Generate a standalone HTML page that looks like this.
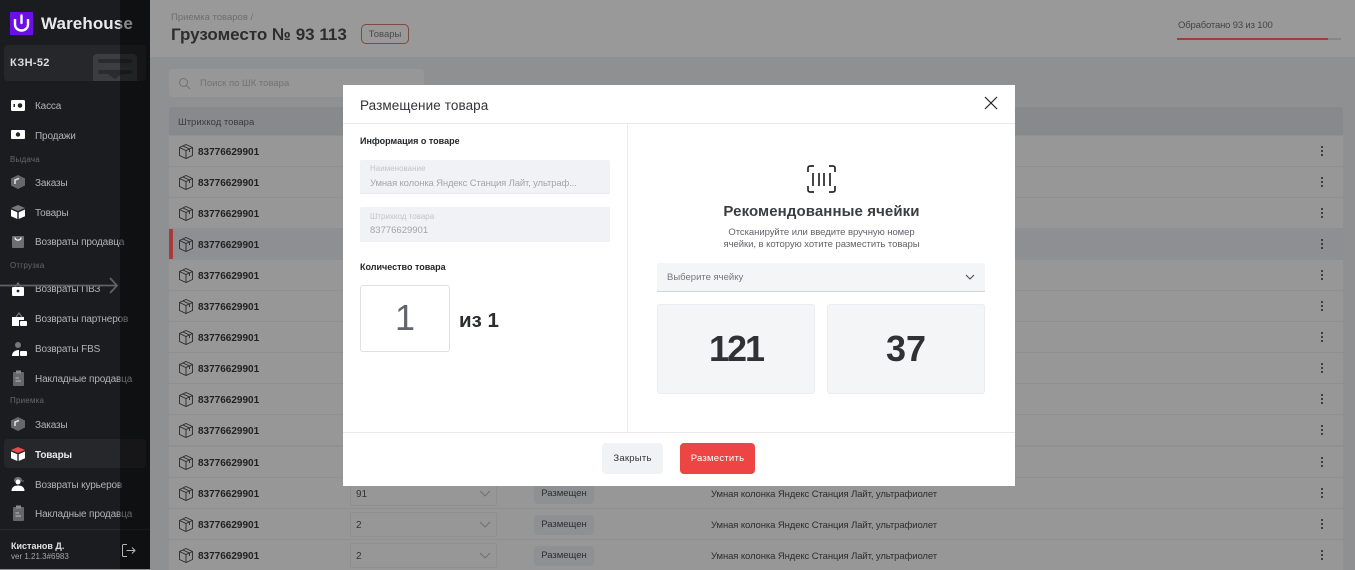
<!DOCTYPE html>
<html lang="ru"><head><meta charset="utf-8"><title>Warehouse</title>
<style>
*{box-sizing:border-box}
html,body{margin:0;padding:0}
body{width:1355px;height:569px;overflow:hidden;position:relative;background:#8f9092;font-family:"Liberation Sans",sans-serif}
.a{position:absolute;white-space:nowrap}
.side{position:absolute;left:0;top:0;width:150px;height:569px;background:#1b1c20;overflow:hidden}
.strip{position:absolute;left:120px;top:0;width:30px;height:569px;background:rgba(0,0,0,.42)}
.m{position:absolute;left:35px;font-size:10px;letter-spacing:-.15px;color:#b3b3b5;line-height:14px;white-space:nowrap;margin-top:1px}
.s{position:absolute;left:10px;font-size:8px;letter-spacing:.2px;color:#66676b;line-height:12px;margin-top:1px}
.ic{position:absolute;left:10px;width:16px;height:16px}
.row{position:absolute;left:169px;width:1174px;height:30px;background:#979797}
.row .id{position:absolute;left:29px;top:10px;font-size:10px;font-weight:bold;color:#222;line-height:14px}
.row svg.box{position:absolute;left:9px;top:7px;width:16px;height:17px}
.row svg.dots{position:absolute;left:1151px;top:8px;width:4px;height:14px}
.sel{position:absolute;left:181px;top:3px;width:147px;height:25px;border:1px solid #8f8f8f;border-radius:2px;font-size:10px;color:#333;padding:7px 5px;line-height:12px}
.st{position:absolute;left:365px;top:6px;width:60px;height:20px;background:#8f9094;border-radius:4px;font-size:9.5px;color:#2e2e2e;text-align:center;line-height:20px}
.nm{position:absolute;left:542px;top:10px;font-size:9.5px;letter-spacing:-.1px;color:#2e2e2e;line-height:13px;white-space:nowrap}
.modal{position:absolute;left:343px;top:85px;width:672px;height:401px;background:#fff}
.fld{position:absolute;left:17px;width:250px;background:#f1f2f5;border-bottom:1px solid #e9eaed;border-radius:2px 2px 0 0}
.fld b{position:absolute;left:10px;font-weight:normal;font-size:8px;color:#c3c4c9;line-height:11px;white-space:nowrap}
.fld i{position:absolute;left:10px;font-style:normal;font-size:9.5px;color:#a4a5ab;line-height:13px;white-space:nowrap}
.cell{position:absolute;top:219px;width:158px;height:90px;background:#f4f5f7;border:1px solid #ecedf0;border-radius:3px;font-weight:bold;font-size:36px;color:#303135;text-align:center;line-height:87px}
</style></head><body>
<svg width="0" height="0" style="position:absolute">
<symbol id="bx" viewBox="0 0 16 17"><path fill="none" stroke="#2a2a2a" stroke-width=".9" d="M8 1.5 14.5 4.5V12.5L8 15.5 1.5 12.5V4.5ZM1.5 4.5 8 7.5 14.5 4.5M8 7.5V15.5M5 3 11.5 6V9"/></symbol>
<symbol id="dt" viewBox="0 0 4 14"><g fill="#222"><circle cx="2" cy="3" r="1"/><circle cx="2" cy="7" r="1"/><circle cx="2" cy="11" r="1"/></g></symbol>
<symbol id="cv" viewBox="0 0 12 7"><path fill="none" stroke="#6f6f6f" stroke-width=".9" d="M1 1 6 6 11 1"/></symbol>
</svg>

<!-- header -->
<div class="a" style="left:150px;top:0;width:1205px;height:57px;background:#999"></div>
<div class="a" style="left:171px;top:11px;font-size:9.5px;color:#6e6e6e;line-height:14px">Приемка товаров /</div>
<div class="a" style="left:171px;top:23px;font-size:17px;font-weight:bold;color:#2d2d2d;line-height:24px">Грузоместо № 93 113</div>
<div class="a" style="left:361px;top:24px;width:48px;height:20px;border:1px solid #7f4a3e;border-radius:5px;font-size:9.5px;color:#4a4a4a;text-align:center;line-height:20px">Товары</div>
<div class="a" style="left:1178px;top:19px;font-size:9.5px;letter-spacing:-.17px;color:#454545;line-height:13px">Обработано 93 из 100</div>
<div class="a" style="left:1177px;top:38px;width:164px;height:2px;background:#86878c"></div>
<div class="a" style="left:1177px;top:38px;width:151px;height:2px;background:#a63a3c"></div>

<!-- search -->
<div class="a" style="left:169px;top:69px;width:255px;height:28px;background:#979797;border-radius:3px"></div>
<svg class="a" style="left:178px;top:77px" width="13" height="13" viewBox="0 0 13 13" fill="none" stroke="#727272" stroke-width="1"><circle cx="5.5" cy="5.5" r="4"/><path d="M8.5 8.5 12 12"/></svg>
<div class="a" style="left:200px;top:77px;font-size:9.5px;color:#737373;line-height:13px">Поиск по ШК товара</div>

<!-- table head -->
<div class="a" style="left:169px;top:107px;width:1174px;height:28px;background:#88898c;border-radius:2px 2px 0 0"></div>
<div class="a" style="left:178px;top:116px;font-size:9.5px;color:#3c3c3c;line-height:14px">Штрихкод товара</div>

<div class="row" style="top:136px"><svg class="box"><use href="#bx"/></svg><div class="id">83776629901</div><svg class="dots"><use href="#dt"/></svg></div>
<div class="row" style="top:167px"><svg class="box"><use href="#bx"/></svg><div class="id">83776629901</div><svg class="dots"><use href="#dt"/></svg></div>
<div class="row" style="top:198px"><svg class="box"><use href="#bx"/></svg><div class="id">83776629901</div><svg class="dots"><use href="#dt"/></svg></div>
<div class="row" style="top:229px;background:#8e8f92"><div class="a" style="left:0;top:0;width:4px;height:30px;background:#a63a3c"></div><svg class="box"><use href="#bx"/></svg><div class="id">83776629901</div><svg class="dots"><use href="#dt"/></svg></div>
<div class="row" style="top:260px"><svg class="box"><use href="#bx"/></svg><div class="id">83776629901</div><svg class="dots"><use href="#dt"/></svg></div>
<div class="row" style="top:291px"><svg class="box"><use href="#bx"/></svg><div class="id">83776629901</div><svg class="dots"><use href="#dt"/></svg></div>
<div class="row" style="top:322px"><svg class="box"><use href="#bx"/></svg><div class="id">83776629901</div><svg class="dots"><use href="#dt"/></svg></div>
<div class="row" style="top:353px"><svg class="box"><use href="#bx"/></svg><div class="id">83776629901</div><svg class="dots"><use href="#dt"/></svg></div>
<div class="row" style="top:384px"><svg class="box"><use href="#bx"/></svg><div class="id">83776629901</div><svg class="dots"><use href="#dt"/></svg></div>
<div class="row" style="top:415px"><svg class="box"><use href="#bx"/></svg><div class="id">83776629901</div><svg class="dots"><use href="#dt"/></svg></div>
<div class="row" style="top:447px"><svg class="box"><use href="#bx"/></svg><div class="id">83776629901</div><svg class="dots"><use href="#dt"/></svg></div>
<div class="row" style="top:478px"><svg class="box"><use href="#bx"/></svg><div class="id">83776629901</div><div class="sel">91<svg class="a" style="left:128px;top:8px" width="12" height="7"><use href="#cv"/></svg></div><div class="st">Размещен</div><div class="nm">Умная колонка Яндекс Станция Лайт, ультрафиолет</div><svg class="dots"><use href="#dt"/></svg></div>
<div class="row" style="top:509px"><svg class="box"><use href="#bx"/></svg><div class="id">83776629901</div><div class="sel">2<svg class="a" style="left:128px;top:8px" width="12" height="7"><use href="#cv"/></svg></div><div class="st">Размещен</div><div class="nm">Умная колонка Яндекс Станция Лайт, ультрафиолет</div><svg class="dots"><use href="#dt"/></svg></div>
<div class="row" style="top:540px"><svg class="box"><use href="#bx"/></svg><div class="id">83776629901</div><div class="sel">2<svg class="a" style="left:128px;top:8px" width="12" height="7"><use href="#cv"/></svg></div><div class="st">Размещен</div><div class="nm">Умная колонка Яндекс Станция Лайт, ультрафиолет</div><svg class="dots"><use href="#dt"/></svg></div>

<!-- sidebar -->
<div class="side">
  <div class="a" style="left:10px;top:12px;width:23px;height:23px;background:#6a0fe8"></div>
  <svg class="a" style="left:10px;top:12px" width="23" height="23" viewBox="0 0 23 23" fill="none" stroke="#fff" stroke-width="2.4"><path d="M11.5 3.5V11" stroke-linecap="round"/><path d="M5 7V12.5C5 16 8 18.5 11.5 18.5S18 16 18 12.5V7"/></svg>
  <div class="a" style="left:41px;top:13px;font-size:17px;font-weight:bold;letter-spacing:.1px;color:#e9e9ea;line-height:22px">Warehouse</div>

  <div class="a" style="left:4px;top:45px;width:142px;height:36px;background:#26272b;border-radius:4px"></div>
  <div class="a" style="left:10px;top:56px;font-size:11px;font-weight:bold;letter-spacing:.3px;color:#dcdcdd;line-height:15px">КЗН-52</div>
  <div class="a" style="left:93px;top:54px;width:44px;height:27px;background:#3c3d41;border-radius:4px 4px 0 0"></div>
  <div class="a" style="left:98px;top:59px;width:34px;height:4px;background:#2a2b2f;border-radius:2px"></div>
  <div class="a" style="left:98px;top:70px;width:34px;height:4px;background:#2a2b2f;border-radius:2px"></div>
  <svg class="a" style="left:108px;top:74px" width="14" height="6" viewBox="0 0 14 6"><path d="M0 0H14L7 5Z" fill="#2a2b2f"/></svg>

  <svg class="ic" style="top:98px" viewBox="0 0 16 16"><rect x="1" y="2" width="14" height="11" rx="1.5" fill="#fff"/><circle cx="10" cy="7.5" r="2.3" fill="#222"/><rect x="3.5" y="6" width="1.5" height="3" fill="#222"/></svg>
  <div class="m" style="top:99px">Касса</div>
  <svg class="ic" style="top:127px" viewBox="0 0 16 16"><rect x="1" y="3" width="14" height="9" rx="1" fill="#fff"/><circle cx="8" cy="7.5" r="2.2" fill="#222"/></svg>
  <div class="m" style="top:129px">Продажи</div>
  <div class="s" style="top:153px">Выдача</div>
  <svg class="ic" style="top:174px" viewBox="0 0 16 16"><path d="M8 1 15 4.5V11.5L8 15 1 11.5V4.5Z" fill="#66676b"/><path d="M5 10V6L9 4.5" stroke="#ddd" stroke-width="1.6" fill="none"/></svg>
  <div class="m" style="top:176px">Заказы</div>
  <svg class="ic" style="top:204px" viewBox="0 0 16 16"><path d="M8 1 15 4 8 7 1 4Z" fill="#77787c"/><path d="M1 5.5 7.3 8.3V15L1 12.2ZM15 5.5 8.7 8.3V15L15 12.2Z" fill="#fff"/></svg>
  <div class="m" style="top:206px">Товары</div>
  <svg class="ic" style="top:234px" viewBox="0 0 16 16"><rect x="2" y="2" width="12" height="12" rx="1" fill="#6d6e72"/><path d="M5 3.5C5 7 11 7 11 3.5" stroke="#fff" stroke-width="1.3" fill="none"/></svg>
  <div class="m" style="top:235px">Возвраты продавца</div>
  <div class="s" style="top:259px">Отгрузка</div>
  <svg class="ic" style="top:281px" viewBox="0 0 16 16"><path d="M5 6 8 2 11 6" stroke="#77787c" stroke-width="1.2" fill="none"/><rect x="2" y="6" width="12" height="9" rx="1" fill="#fff"/><circle cx="8" cy="10" r="1.4" fill="#222"/></svg>
  <div class="m" style="top:282px">Возвраты ПВЗ</div>
  <svg class="ic" style="top:311px;width:17px;height:17px" viewBox="0 0 17 17"><path d="M6 6 9 2 12 6" stroke="#77787c" stroke-width="1.2" fill="none"/><path d="M2 6H14V9H9V15H2Z" fill="#fff"/><rect x="10" y="10" width="7" height="5" rx="1" fill="#fff"/></svg>
  <div class="m" style="top:312px">Возвраты партнеров</div>
  <svg class="ic" style="top:341px;width:17px;height:17px" viewBox="0 0 17 17"><circle cx="8" cy="4" r="3" fill="#77787c"/><path d="M2 15C2 11 5 9 9 9V15Z" fill="#fff"/><rect x="10" y="10" width="7" height="5" rx="1" fill="#fff"/></svg>
  <div class="m" style="top:342px">Возвраты FBS</div>
  <svg class="ic" style="top:370px" viewBox="0 0 16 16"><rect x="3" y="2" width="11" height="14" rx="1" fill="#66676b"/><rect x="6" y="0.5" width="5" height="3" fill="#8a8b8f"/><path d="M5.5 8H9M5.5 11H11" stroke="#bbb"/></svg>
  <div class="m" style="top:372px">Накладные продавца</div>
  <div class="s" style="top:394px">Приемка</div>
  <svg class="ic" style="top:416px" viewBox="0 0 16 16"><path d="M8 1 15 4.5V11.5L8 15 1 11.5V4.5Z" fill="#66676b"/><path d="M5 10V6L9 4.5" stroke="#ddd" stroke-width="1.6" fill="none"/></svg>
  <div class="m" style="top:418px">Заказы</div>
  <div class="a" style="left:4px;top:439px;width:142px;height:29px;background:#26272b;border-radius:4px"></div>
  <svg class="ic" style="top:446px" viewBox="0 0 16 16"><path d="M8 1 15 4 8 7 1 4Z" fill="#ea4a4a"/><path d="M1 5.5 7.3 8.3V15L1 12.2ZM15 5.5 8.7 8.3V15L15 12.2Z" fill="#fff"/></svg>
  <div class="m" style="top:448px;color:#e6e6e7;font-weight:bold;letter-spacing:-.15px">Товары</div>
  <svg class="ic" style="top:476px" viewBox="0 0 16 16"><path d="M4 4.5C4 2 6 1 8 1S12 2 12 4.5H14V5.5H4Z" fill="#6d6e72"/><circle cx="8" cy="6" r="2.5" fill="#fff"/><path d="M1.5 15C1.5 11 4.5 9.5 8 9.5S14.5 11 14.5 15Z" fill="#fff"/></svg>
  <div class="m" style="top:478px">Возвраты курьеров</div>
  <svg class="ic" style="top:505px" viewBox="0 0 16 16"><rect x="3" y="2" width="11" height="14" rx="1" fill="#66676b"/><rect x="6" y="0.5" width="5" height="3" fill="#8a8b8f"/><path d="M5.5 8H9M5.5 11H11" stroke="#bbb"/></svg>
  <div class="m" style="top:507px">Накладные продавца</div>

  <div class="a" style="left:0;top:529px;width:150px;height:1px;background:#2b2c30"></div>
  <div class="a" style="left:11px;top:539px;font-size:9px;font-weight:bold;color:#e2e2e3;line-height:14px">Кистанов Д.</div>
  <div class="a" style="left:11px;top:551px;font-size:8px;color:#a5a5a7;line-height:12px">ver 1.21.3#6983</div>

  <div class="strip"></div>
  <svg class="a" style="left:121px;top:543px" width="15" height="15" viewBox="0 0 15 15" fill="none" stroke="#b5b5b6" stroke-width="1"><path d="M6 1.5H2.5A1 1 0 0 0 1.5 2.5V12.5A1 1 0 0 0 2.5 13.5H6M5.5 7.5H14M11 4.5 14 7.5 11 10.5"/></svg>
  <svg class="a" style="left:0;top:276px" width="120" height="20" viewBox="0 0 120 20" fill="none" stroke="#606163" stroke-width="1.8"><path d="M0 9.5H117M110 2 117 9.5 110 17"/></svg>
</div>

<!-- modal -->
<div class="modal">
  <div class="a" style="left:17px;top:12px;font-size:13.5px;letter-spacing:.1px;color:#33343a;line-height:18px">Размещение товара</div>
  <svg class="a" style="left:641px;top:11px" width="14" height="14" viewBox="0 0 14 14" fill="none" stroke="#222" stroke-width="1.2"><path d="M1 1 13 13M13 1 1 13"/></svg>
  <div class="a" style="left:0;top:38px;width:672px;height:1px;background:#e9eaee"></div>
  <div class="a" style="left:284px;top:39px;width:1px;height:308px;background:#eceded"></div>
  <div class="a" style="left:0;top:347px;width:672px;height:1px;background:#e9eaee"></div>

  <div class="a" style="left:17px;top:50px;font-size:9px;font-weight:bold;color:#25262a;line-height:13px">Информация о товаре</div>
  <div class="fld" style="top:75px;height:34px"><b style="top:3px">Наименование</b><i style="top:17px;letter-spacing:-.15px">Умная колонка Яндекс Станция Лайт, ультраф...</i></div>
  <div class="fld" style="top:122px;height:35px;border-bottom:0"><b style="top:4px">Штрихкод товара</b><i style="top:17px">83776629901</i></div>
  <div class="a" style="left:17px;top:176px;font-size:9px;font-weight:bold;color:#25262a;line-height:13px">Количество товара</div>
  <div class="a" style="left:17px;top:200px;width:90px;height:67px;border:1px solid #dfe0e4;border-radius:3px;font-size:36px;color:#63646c;text-align:center;line-height:64px">1</div>
  <div class="a" style="left:116px;top:221px;font-size:20.5px;font-weight:bold;color:#2c2d31;line-height:30px">из 1</div>

  <svg class="a" style="left:464px;top:80px" width="29" height="28" viewBox="0 0 29 28" fill="none" stroke="#26272b" stroke-width="1.7"><path d="M1 7V3A2 2 0 0 1 3 1H7M22 1H26A2 2 0 0 1 28 3V7M1 21V25A2 2 0 0 0 3 27H7M22 27H26A2 2 0 0 0 28 25V21M6 8V21M12 8V21M17 8V21M23 8V21"/></svg>
  <div class="a" style="left:285px;width:387px;top:117px;text-align:center;font-size:15px;font-weight:bold;letter-spacing:.1px;color:#3c3d42;line-height:20px">Рекомендованные ячейки</div>
  <div class="a" style="left:285px;width:387px;top:142px;text-align:center;font-size:9.5px;letter-spacing:-.05px;color:#63646a;line-height:12px">Отсканируйте или введите вручную номер<br>ячейки, в которую хотите разместить товары</div>
  <div class="a" style="left:314px;top:178px;width:328px;height:29px;background:#f4f5f7;border-bottom:1px solid #d4d5da;border-radius:2px 2px 0 0"></div>
  <div class="a" style="left:324px;top:186px;font-size:9.5px;color:#75767c;line-height:13px">Выберите ячейку</div>
  <svg class="a" style="left:622px;top:189px" width="10" height="7" viewBox="0 0 10 7" fill="none" stroke="#4a4b50" stroke-width="1.1"><path d="M1 1 5 5 9 1"/></svg>
  <div class="cell" style="left:314px;letter-spacing:-2px">121</div>
  <div class="cell" style="left:484px">37</div>

  <div class="a" style="left:259px;top:358px;width:61px;height:31px;background:#f1f2f5;border-radius:4px;font-size:9.5px;letter-spacing:.25px;color:#33343a;text-align:center;line-height:31px">Закрыть</div>
  <div class="a" style="left:337px;top:358px;width:75px;height:31px;background:#ef4444;border-radius:4px;font-size:9.5px;letter-spacing:.25px;color:#fff;text-align:center;line-height:31px">Разместить</div>
</div>
</body></html>
